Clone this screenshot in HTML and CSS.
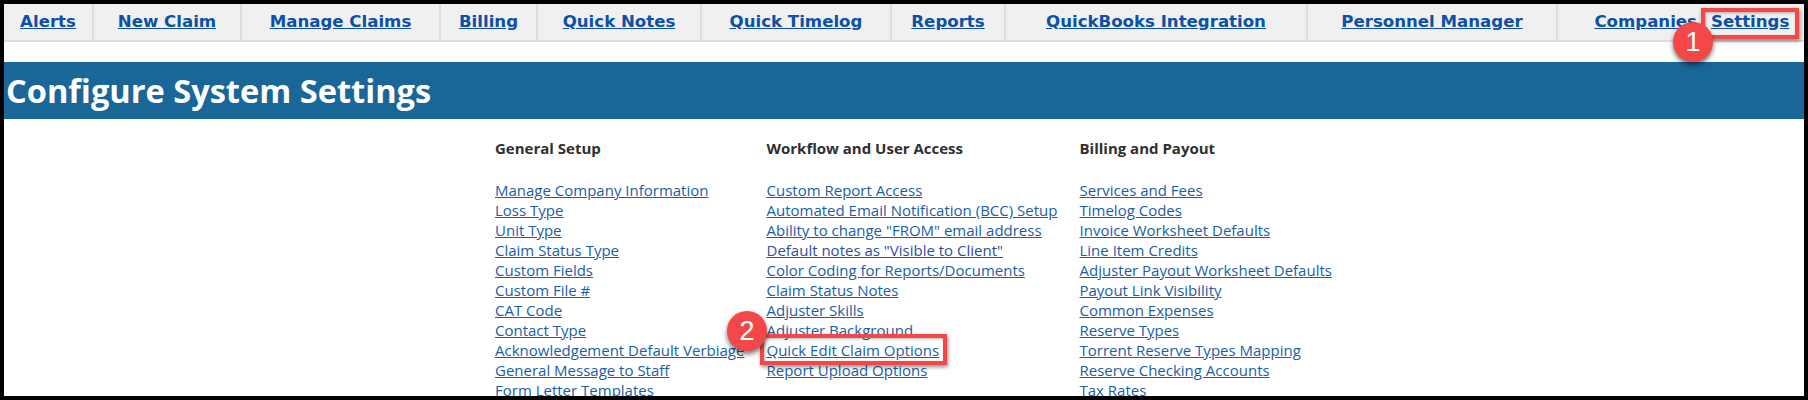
FILE: index.html
```html
<!DOCTYPE html>
<html lang="en">
<head>
<meta charset="utf-8">
<title>Configure System Settings</title>
<link rel="stylesheet" href="styles.css">
</head>
<body>
<div class="page">
  <nav class="nav">
    <div class="cell"><a href="#">Alerts</a></div>
    <div class="cell"><a href="#">New Claim</a></div>
    <div class="cell"><a href="#">Manage Claims</a></div>
    <div class="cell"><a href="#">Billing</a></div>
    <div class="cell"><a href="#">Quick Notes</a></div>
    <div class="cell"><a href="#">Quick Timelog</a></div>
    <div class="cell"><a href="#">Reports</a></div>
    <div class="cell"><a href="#">QuickBooks Integration</a></div>
    <div class="cell"><a href="#">Personnel Manager</a></div>
    <div class="cell cell-companies"><a href="#">Companies</a></div>
    <div class="cell cell-settings"><a href="#">Settings</a></div>
  </nav>
  <h1 class="banner">Configure System Settings</h1>
  <div class="columns">
    <section class="col col-general">
      <h2>General Setup</h2>
      <ul>
        <li><a href="#">Manage Company Information</a></li>
        <li><a href="#">Loss Type</a></li>
        <li><a href="#">Unit Type</a></li>
        <li><a href="#">Claim Status Type</a></li>
        <li><a href="#">Custom Fields</a></li>
        <li><a href="#">Custom File #</a></li>
        <li><a href="#">CAT Code</a></li>
        <li><a href="#">Contact Type</a></li>
        <li><a href="#">Acknowledgement Default Verbiage</a></li>
        <li><a href="#">General Message to Staff</a></li>
        <li><a href="#">Form Letter Templates</a></li>
      </ul>
    </section>
    <section class="col col-workflow">
      <h2>Workflow and User Access</h2>
      <ul>
        <li><a href="#">Custom Report Access</a></li>
        <li><a href="#">Automated Email Notification (BCC) Setup</a></li>
        <li><a href="#">Ability to change "FROM" email address</a></li>
        <li><a class="visited" href="#">Default notes as "Visible to Client"</a></li>
        <li><a href="#">Color Coding for Reports/Documents</a></li>
        <li><a href="#">Claim Status Notes</a></li>
        <li><a href="#">Adjuster Skills</a></li>
        <li><a href="#">Adjuster Background</a></li>
        <li><a href="#">Quick Edit Claim Options</a></li>
        <li><a href="#">Report Upload Options</a></li>
      </ul>
    </section>
    <section class="col col-billing">
      <h2>Billing and Payout</h2>
      <ul>
        <li><a href="#">Services and Fees</a></li>
        <li><a href="#">Timelog Codes</a></li>
        <li><a href="#">Invoice Worksheet Defaults</a></li>
        <li><a href="#">Line Item Credits</a></li>
        <li><a href="#">Adjuster Payout Worksheet Defaults</a></li>
        <li><a href="#">Payout Link Visibility</a></li>
        <li><a href="#">Common Expenses</a></li>
        <li><a href="#">Reserve Types</a></li>
        <li><a href="#">Torrent Reserve Types Mapping</a></li>
        <li><a href="#">Reserve Checking Accounts</a></li>
        <li><a href="#">Tax Rates</a></li>
      </ul>
    </section>
  </div>
</div>
<div class="mark-box mark-box-1"></div>
<div class="mark-num mark-num-1">1</div>
<div class="mark-box mark-box-2"></div>
<div class="mark-num mark-num-2">2</div>
</body>
</html>
```
FILE: styles.css
```css
* { box-sizing: border-box; }
html, body { margin: 0; height: 400px; overflow: hidden; }
body { background: #000; padding: 4px; }
.page { background: #fff; height: 392px; overflow: hidden; }

.nav {
  display: grid;
  grid-template-columns: 90px 148px 199px 97px 164px 190px 114px 302px 250px 141px 1fr;
  height: 38px;
  background: #f0f0f0;
  border-bottom: 2px solid #dddddd;
}
.cell {
  display: flex;
  align-items: center;
  justify-content: center;
  border-right: 2px solid #dddddd;
  font: bold 16.6px "DejaVu Sans", Verdana, sans-serif;
  padding-bottom: 2px;
}
.cell a { color: #0c50a8; }
.cell-companies { border-right: 0; justify-content: flex-end; padding-right: 2px; }
.cell-settings { border-right: 0; justify-content: flex-start; padding-left: 12px; }

.banner {
  margin: 20px 0 0;
  height: 57px;
  padding: 0 0 0 2px;
  background: #196699;
  color: #fff;
  font: bold 32.6px/57px "Open Sans", sans-serif;
}

.columns {
  display: grid;
  grid-template-columns: 271.5px 313px 1fr;
  padding: 19px 0 0 491px;
}
.col h2 {
  margin: 0;
  height: 42px;
  color: #2f2f2f;
  font: bold 15px/20px "Open Sans", sans-serif;
}
.col ul { margin: 0; padding: 0; list-style: none; }
.col li {
  height: 20px;
  font: 15px/20px "Open Sans", sans-serif;
  white-space: nowrap;
}
.col a { color: #1a5ea8; }
.col a.visited { color: #2f4ea0; }

.mark-box {
  position: absolute;
  border: 4px solid #f44848;
  box-shadow: 1px 2px 4px rgba(0,0,0,.45), inset 1px 1px 3px rgba(0,0,0,.3);
}
.mark-box-1 { left: 1701px; top: 8px; width: 98px; height: 31px; }
.mark-box-2 { left: 760px; top: 334px; width: 187px; height: 31px; }
.mark-num {
  position: absolute;
  width: 40px;
  height: 40px;
  border-radius: 50%;
  background: #f44848;
  box-shadow: 0 3px 5px rgba(0,0,0,.55);
  color: #fff;
  font: 27px/40px "Liberation Sans", Arial, sans-serif;
  text-align: center;
}
.mark-num-1 { left: 1673px; top: 22px; }
.mark-num-2 { left: 727px; top: 311px; }
```
